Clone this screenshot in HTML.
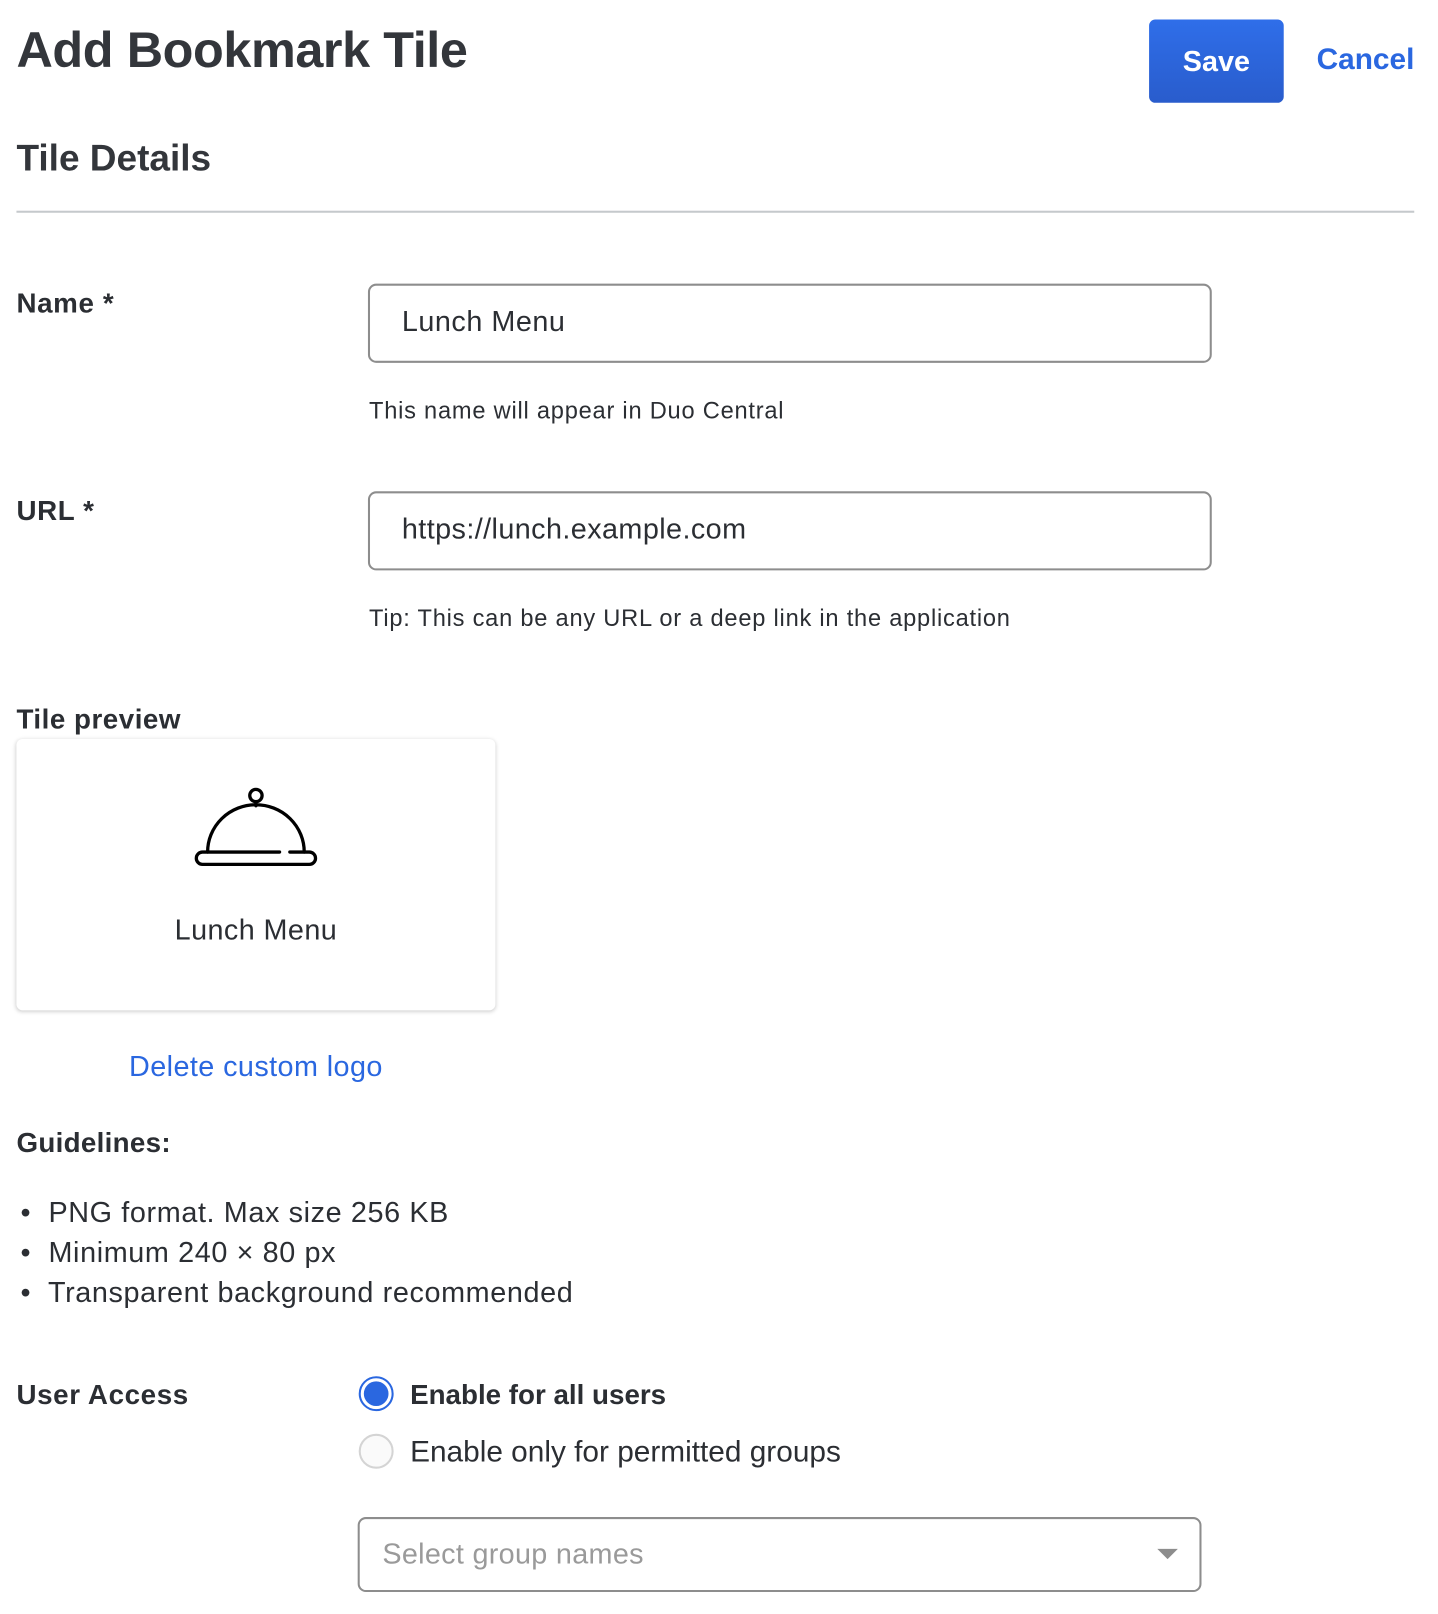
<!DOCTYPE html>
<html><head><meta charset="utf-8"><style>
html,body{margin:0;padding:0;background:#fff;width:1438px;height:1612px;overflow:hidden;font-family:"Liberation Sans",sans-serif;color:#2b2e33}
#w{position:absolute;left:0;top:0;width:1400px;height:1570px;transform:scale(1.0278);transform-origin:0 0}
.a{position:absolute;white-space:nowrap}
.b{font-weight:bold}
.inp{position:absolute;border:2px solid #8d8d8d;border-radius:8px;box-sizing:border-box;background:#fff}
</style></head><body><div id="w">
<div class="a b" style="left:16px;top:21px;font-size:49px;line-height:56px;color:#33363b;letter-spacing:-0.4px">Add Bookmark Tile</div>
<div class="a b" style="left:1118px;top:19px;width:131px;height:81px;border-radius:6px;background:linear-gradient(#2f6ee9,#295ccc);color:#fff;font-size:28px;line-height:81px;text-align:center">Save</div>
<div class="a b" style="left:1281px;top:40px;font-size:29px;line-height:36px;color:#2a67e0">Cancel</div>
<div class="a b" style="left:16px;top:133px;font-size:36px;line-height:42px;color:#33363b">Tile Details</div>
<div class="a" style="left:16px;top:205px;width:1360px;height:2px;background:#c5c9cc"></div>

<div class="a b" style="left:16px;top:279px;font-size:27px;line-height:32px;letter-spacing:0.6px">Name *</div>
<div class="inp" style="left:358px;top:276px;width:821px;height:77px"></div>
<div class="a" style="left:391px;top:296px;font-size:28px;line-height:34px;letter-spacing:0.5px">Lunch Menu</div>
<div class="a" style="left:359px;top:385px;font-size:23px;line-height:28px;letter-spacing:0.75px">This name will appear in Duo Central</div>

<div class="a b" style="left:16px;top:481px;font-size:27px;line-height:32px;letter-spacing:0.6px">URL *</div>
<div class="inp" style="left:358px;top:478px;width:821px;height:77px"></div>
<div class="a" style="left:391px;top:498px;font-size:28px;line-height:34px;letter-spacing:0.4px">https://lunch.example.com</div>
<div class="a" style="left:359px;top:587px;font-size:23px;line-height:28px;letter-spacing:0.75px">Tip: This can be any URL or a deep link in the application</div>

<div class="a b" style="left:16px;top:684px;font-size:27px;line-height:32px;letter-spacing:0.5px">Tile preview</div>
<div class="a" style="left:16px;top:719px;width:466px;height:264px;border-radius:6px;background:#fff;box-shadow:0 1px 4px rgba(0,0,0,0.22)"></div>
<svg class="a" style="left:186px;top:760px" width="126" height="90" viewBox="186 760 126 90">
<g fill="none" stroke="#000" stroke-width="3.2" stroke-linecap="round">
<circle cx="249" cy="774" r="6"/>
<path d="M249 780 V784"/>
<path d="M202 829 A47 46 0 0 1 296 829"/>
<path d="M197 829 H272 M282 829 H301 A5.5 5.5 0 0 1 301 841 H197 A5.5 5.5 0 0 1 197 829"/>
</g></svg>
<div class="a" style="left:16px;width:466px;top:888px;font-size:28px;line-height:34px;text-align:center;letter-spacing:0.4px">Lunch Menu</div>

<div class="a" style="left:16px;width:466px;top:1020px;font-size:28px;line-height:36px;text-align:center;color:#2a67e0;letter-spacing:0.4px">Delete custom logo</div>

<div class="a b" style="left:16px;top:1096px;font-size:27px;line-height:32px;letter-spacing:0.3px">Guidelines:</div>
<div class="a" style="left:20px;top:1160px;font-size:28px;line-height:39px;letter-spacing:0.6px">•&nbsp; PNG format. Max size 256 KB<br>•&nbsp; Minimum 240 × 80 px<br>•&nbsp; Transparent background recommended</div>

<div class="a b" style="left:16px;top:1341px;font-size:27px;line-height:32px;letter-spacing:0.6px">User Access</div>
<div class="a" style="left:349px;top:1339px;width:34px;height:34px;border-radius:50%;border:2px solid #2a67e0;box-sizing:border-box;background:#fff"></div>
<div class="a" style="left:354px;top:1344px;width:24px;height:24px;border-radius:50%;background:#2a67e0"></div>
<div class="a b" style="left:399px;top:1339px;font-size:27px;line-height:36px">Enable for all users</div>
<div class="a" style="left:349px;top:1395px;width:34px;height:34px;border-radius:50%;border:2px solid #d4d4d4;box-sizing:border-box;background:#fafafa"></div>
<div class="a" style="left:399px;top:1395px;font-size:29px;line-height:36px">Enable only for permitted groups</div>

<div class="inp" style="left:348px;top:1476px;width:821px;height:73px"></div>
<div class="a" style="left:372px;top:1494px;font-size:28px;line-height:36px;color:#9a9a9a;letter-spacing:0.3px">Select group names</div>
<div class="a" style="left:1126px;top:1507px;width:0;height:0;border-left:10px solid transparent;border-right:10px solid transparent;border-top:10px solid #8d8d8d"></div>
</div></body></html>
